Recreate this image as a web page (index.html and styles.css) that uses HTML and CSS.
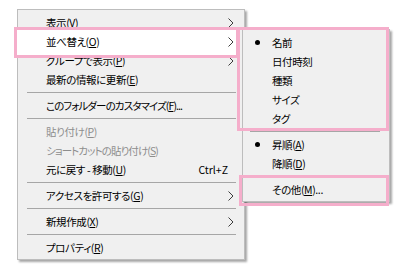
FILE: index.html
```html
<!DOCTYPE html>
<html lang="ja">
<head>
<meta charset="utf-8">
<link rel="stylesheet" href="styles.css">
</head>
<body>
<div class="stage">
  <div class="menu main">
    <div class="item"><span class="label">表示(<u>V</u>)</span><svg class="chev" width="6" height="10" viewBox="0 0 6 10"><polyline points="0.5,0.5 5,5 0.5,9.5"/></svg></div>
    <div class="item active"><span class="label">並べ替え(<u>O</u>)</span><svg class="chev" width="6" height="10" viewBox="0 0 6 10"><polyline points="0.5,0.5 5,5 0.5,9.5"/></svg></div>
    <div class="item"><span class="label">グループで表示(<u>P</u>)</span><svg class="chev" width="6" height="10" viewBox="0 0 6 10"><polyline points="0.5,0.5 5,5 0.5,9.5"/></svg></div>
    <div class="item"><span class="label">最新の情報に更新(<u>E</u>)</span></div>
    <div class="sep"></div>
    <div class="item"><span class="label narrow">このフォルダーのカスタマイズ(<u>F</u>)...</span></div>
    <div class="sep"></div>
    <div class="item disabled"><span class="label">貼り付け(<u>P</u>)</span></div>
    <div class="item disabled"><span class="label narrow">ショートカットの貼り付け(<u>S</u>)</span></div>
    <div class="item"><span class="label">元に戻す - 移動(<u>U</u>)</span><span class="shortcut">Ctrl+Z</span></div>
    <div class="sep"></div>
    <div class="item"><span class="label">アクセスを許可する(<u>G</u>)</span><svg class="chev" width="6" height="10" viewBox="0 0 6 10"><polyline points="0.5,0.5 5,5 0.5,9.5"/></svg></div>
    <div class="sep"></div>
    <div class="item"><span class="label">新規作成(<u>X</u>)</span><svg class="chev" width="6" height="10" viewBox="0 0 6 10"><polyline points="0.5,0.5 5,5 0.5,9.5"/></svg></div>
    <div class="sep"></div>
    <div class="item"><span class="label">プロパティ(<u>R</u>)</span></div>
  </div>

  <div class="menu sub">
    <div class="item checked"><span class="bullet"></span><span class="label">名前</span></div>
    <div class="item"><span class="label">日付時刻</span></div>
    <div class="item"><span class="label">種類</span></div>
    <div class="item"><span class="label">サイズ</span></div>
    <div class="item"><span class="label">タグ</span></div>
    <div class="sep"></div>
    <div class="item checked"><span class="bullet"></span><span class="label">昇順(<u>A</u>)</span></div>
    <div class="item"><span class="label">降順(<u>D</u>)</span></div>
    <div class="sep"></div>
    <div class="item"><span class="label">その他(<u>M</u>)...</span></div>
  </div>

  <div class="mark mark-row"></div>
  <div class="mark mark-sort"></div>
  <div class="mark mark-more"></div>
</div>
</body>
</html>
```

FILE: styles.css
```css
html, body {
  margin: 0;
  padding: 0;
  background: #ffffff;
}

.stage {
  position: relative;
  width: 400px;
  height: 273px;
  overflow: hidden;
  padding: 9px 0 0 17px;
  box-sizing: border-box;
  font-family: "Noto Sans CJK JP", "Noto Sans", sans-serif;
  font-size: 10.5px;
  letter-spacing: -0.4px;
  font-feature-settings: "palt";
  color: #000;
}

.menu {
  background: #f0f0f0;
  border: 1px solid #bdbdbd;
  box-sizing: border-box;
  box-shadow: 2px 2px 2px rgba(0, 0, 0, 0.35);
  display: flex;
  flex-direction: column;
}

.main {
  width: 228px;
  padding: 3px 0 2px 0;
}

.sub {
  position: absolute;
  left: 242px;
  top: 29px;
  width: 148px;
  padding: 3px 0 2px 0;
  z-index: 2;
}

.item {
  height: 19px;
  line-height: 19px;
  display: flex;
  align-items: center;
  white-space: nowrap;
}

.main .item {
  padding: 0 10px 0 28px;
}

.sub .item {
  padding: 0 10px 0 29px;
  position: relative;
}

.label {
  flex: 1;
}

.narrow {
  letter-spacing: -0.9px;
}

.label u {
  text-decoration-thickness: 1px;
  text-underline-offset: 1px;
}

.disabled {
  color: #8d8d8d;
}

.active {
  position: relative;
  z-index: 2;
}

.shortcut {
  margin-right: 6px;
  letter-spacing: 0;
}

.chev {
  display: block;
  fill: none;
  stroke: #3c3c3c;
  stroke-width: 1;
}

.sep {
  height: 1px;
  background: #a6a6a6;
  margin: 3px 8px 3px 9px;
}

.sub .sep {
  margin: 3px 9px 3px 7px;
}

.bullet {
  position: absolute;
  left: 12px;
  top: 7px;
  width: 5px;
  height: 5px;
  border-radius: 50%;
  background: #000;
}

.mark {
  position: absolute;
  border: 3px solid #f5aecb;
  box-sizing: border-box;
}

.mark-row {
  left: 14px;
  top: 27px;
  width: 225px;
  height: 31px;
  background: #ffffff;
  z-index: 1;
}

.mark-sort {
  left: 237px;
  top: 27px;
  width: 152px;
  height: 104px;
  z-index: 3;
}

.mark-more {
  left: 239px;
  top: 175px;
  width: 150px;
  height: 31px;
  z-index: 3;
}
```
